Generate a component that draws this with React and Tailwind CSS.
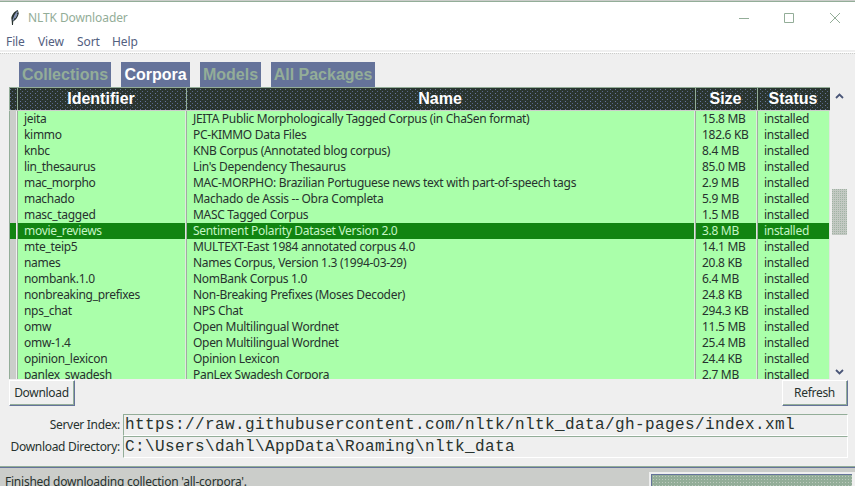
import React from "react";

const ROWS = [
  ["jeita", "JEITA Public Morphologically Tagged Corpus (in ChaSen format)", "15.8 MB"],
  ["kimmo", "PC-KIMMO Data Files", "182.6 KB"],
  ["knbc", "KNB Corpus (Annotated blog corpus)", "8.4 MB"],
  ["lin_thesaurus", "Lin's Dependency Thesaurus", "85.0 MB"],
  ["mac_morpho", "MAC-MORPHO: Brazilian Portuguese news text with part-of-speech tags", "2.9 MB"],
  ["machado", "Machado de Assis -- Obra Completa", "5.9 MB"],
  ["masc_tagged", "MASC Tagged Corpus", "1.5 MB"],
  ["movie_reviews", "Sentiment Polarity Dataset Version 2.0", "3.8 MB"],
  ["mte_teip5", "MULTEXT-East 1984 annotated corpus 4.0", "14.1 MB"],
  ["names", "Names Corpus, Version 1.3 (1994-03-29)", "20.8 KB"],
  ["nombank.1.0", "NomBank Corpus 1.0", "6.4 MB"],
  ["nonbreaking_prefixes", "Non-Breaking Prefixes (Moses Decoder)", "24.8 KB"],
  ["nps_chat", "NPS Chat", "294.3 KB"],
  ["omw", "Open Multilingual Wordnet", "11.5 MB"],
  ["omw-1.4", "Open Multilingual Wordnet", "25.4 MB"],
  ["opinion_lexicon", "Opinion Lexicon", "24.4 KB"],
  ["panlex_swadesh", "PanLex Swadesh Corpora", "2.7 MB"],
];

const GRID = "grid grid-cols-[8px_169px_509px_62px_73px]";

const DITHER =
  "bg-[#2a352f] bg-[radial-gradient(circle_at_1.5px_1.5px,#65739a_0.6px,transparent_0.6px),radial-gradient(circle_at_3.5px_3.5px,#5a678a_0.6px,transparent_0.6px)] bg-[length:5px_4px]";

function Header() {
  return (
    <div className={`${GRID} h-6 border-t border-b border-t-[#93ad98] border-b-[#cbcdca] ${DITHER} font-['Liberation_Sans',Arial,sans-serif] text-base leading-[22px] font-bold tracking-normal text-white`}>
      <div className="border-l border-[#93ad98]" />
      {["Identifier", "Name", "Size", "Status"].map((label) => (
        <div key={label} className="border-l border-[#93ad98] pr-0.5 text-center">
          {label}
        </div>
      ))}
    </div>
  );
}

function Row({ id, name, size, active }) {
  const tone = active ? "bg-[#118411] text-[#c5f5c5]" : "bg-[#aaffaa] text-[#27322e]";
  const cell = `border-r border-l border-l-[#9fae9f] border-r-[#dfe8df] pl-1.5 ${tone}`;
  return (
    <div className={`${GRID} h-4 leading-4`}>
      <div className={`border-r border-l border-l-[#93ad98] border-r-[#efefef] ${active ? "bg-[#118411]" : "bg-[#cbcdca]"}`} />
      <div className={cell}>{id}</div>
      <div className={cell}>{name}</div>
      <div className={cell}>{size}</div>
      <div className={cell}>installed</div>
    </div>
  );
}

function Tab({ label, width, active }) {
  return (
    <div className={`${width} h-[25px] bg-[#65739a] text-center leading-[25px] ${active ? "text-white" : "text-[#93ad98]"}`}>
      {label}
    </div>
  );
}

function Field({ label, value }) {
  return (
    <div className="flex h-[22px]">
      <div className="w-[123px] pr-[3px] text-right leading-[21px]">{label}</div>
      <div className="w-[725px] border border-t-[#93ad98] border-r-white border-b-white border-l-[#93ad98] pl-px font-['Liberation_Mono','Courier_New',monospace] text-[16px] leading-[21px] tracking-[0.4px]">
        {value}
      </div>
    </div>
  );
}

function Button({ label }) {
  return (
    <div className="h-[26px] w-[66px] border-t border-r border-b border-l border-t-white border-r-[#65739a] border-b-[#65739a] border-l-white">
      <div className="h-6 border-r border-b border-[#93ad98] text-center leading-6">{label}</div>
    </div>
  );
}

function Chevron({ down }) {
  return (
    <svg width="9" height="6" viewBox="0 0 9 6" fill="none" stroke="#4a5678" strokeWidth="1.8">
      <path d={down ? "M1 1l3.5 3.5L8 1" : "M1 5l3.5-3.5L8 5"} />
    </svg>
  );
}

export default function App() {
  return (
    <div className="flex h-[486px] w-[855px] flex-col overflow-hidden bg-[#efefef] font-['Noto_Sans','Segoe_UI',sans-serif] text-[12px] tracking-[-0.3px] whitespace-nowrap text-[#27322e]">
      <div className="h-0.5 shrink-0 border-b border-[#93ad98] bg-[#cbcdca]" />
      <div className="flex h-[31px] shrink-0 items-center bg-white">
        <svg className="ml-2.5" width="10" height="17" viewBox="0 0 10 17">
          <path d="M7.8 1C4.8 2 1.8 5.5 1.3 9l.4 3 .3 4h1l.2-3.5C6 11 8 8 8.8 4.500z" fill="#27322e" />
          <path d="M7.500 2.500C5.500 5 4 8 3 11.500M7 5L5 9" stroke="#8593b5" strokeWidth="1.3" fill="none" />
        </svg>
        <span className="ml-2 tracking-[-0.1px] text-[#93ad98]">NLTK Downloader</span>
        <svg className="ml-auto mr-3.5" width="103" height="12" viewBox="0 0 103 12" fill="none" stroke="#93ad98">
          <path d="M1 6.5h10M46.5 1.5h9v9h-9zM92 1l10 10M102 1L92 11" />
        </svg>
      </div>
      <div className="flex h-[17px] shrink-0 bg-white pl-1.5 leading-[17px] tracking-[-0.1px] text-[#536080]">
        <span className="w-8">File</span>
        <span className="w-[39px]">View</span>
        <span className="w-[35px]">Sort</span>
        <span>Help</span>
      </div>
      <div className="mt-0.5 h-px shrink-0 bg-white" />
      <div className="h-px shrink-0 border-t border-dotted border-[#cbcdca]" />
      <div className="mt-2 flex shrink-0 gap-2.5 pl-[19px] font-['Liberation_Sans',Arial,sans-serif] text-base font-bold tracking-normal">
        <Tab label="Collections" width="w-[92px]" />
        <Tab label="Corpora" width="w-[69px]" active />
        <Tab label="Models" width="w-[61px]" />
        <Tab label="All Packages" width="w-[104px]" />
      </div>
      <div className="flex h-[292px] shrink-0 pl-[9px]">
        <div className="w-[821px] overflow-hidden">
          <Header />
          {ROWS.map(([id, name, size]) => (
            <Row key={id} id={id} name={name} size={size} active={id === "movie_reviews"} />
          ))}
        </div>
        <div className="ml-0.5 flex w-[15px] flex-col items-center pt-1.5 pb-1">
          <Chevron />
          <div className="mt-[90px] mb-auto h-[46px] w-[15px] bg-[#c3c9c3] bg-[radial-gradient(circle_at_0.5px_0.5px,#a1b3a4_0.6px,transparent_0.6px)] bg-[length:2px_2px]" />
          <Chevron down />
        </div>
      </div>
      <div className="mt-px flex shrink-0 justify-between pr-[7px] pl-[9px]">
        <Button label="Download" />
        <Button label="Refresh" />
      </div>
      <div className="mt-2 shrink-0">
        <Field label="Server Index:" value="https://raw.githubusercontent.com/nltk/nltk_data/gh-pages/index.xml" />
        <Field label="Download Directory:" value="C:\Users\dahl\AppData\Roaming\nltk_data" />
      </div>
      <div className="mt-2 h-px shrink-0 bg-[#93ad98]" />
      <div className="flex h-[19px] shrink-0 justify-between border-t border-[#65739a] bg-[#cbcdca] pl-[5px]">
        <span className="pt-[5px] tracking-[-0.24px]">Finished downloading collection 'all-corpora'.</span>
        <div className="mt-1 h-4 w-[206px] border-t-2 border-r-[3px] border-l-2 border-[#efefef]">
          <div className="h-full border-t border-l border-[#65739a] bg-[#93ad98] bg-[radial-gradient(circle_at_1.5px_1.5px,#bcc9bd_0.6px,transparent_0.6px)] bg-[length:3px_3px]" />
        </div>
      </div>
    </div>
  );
}
